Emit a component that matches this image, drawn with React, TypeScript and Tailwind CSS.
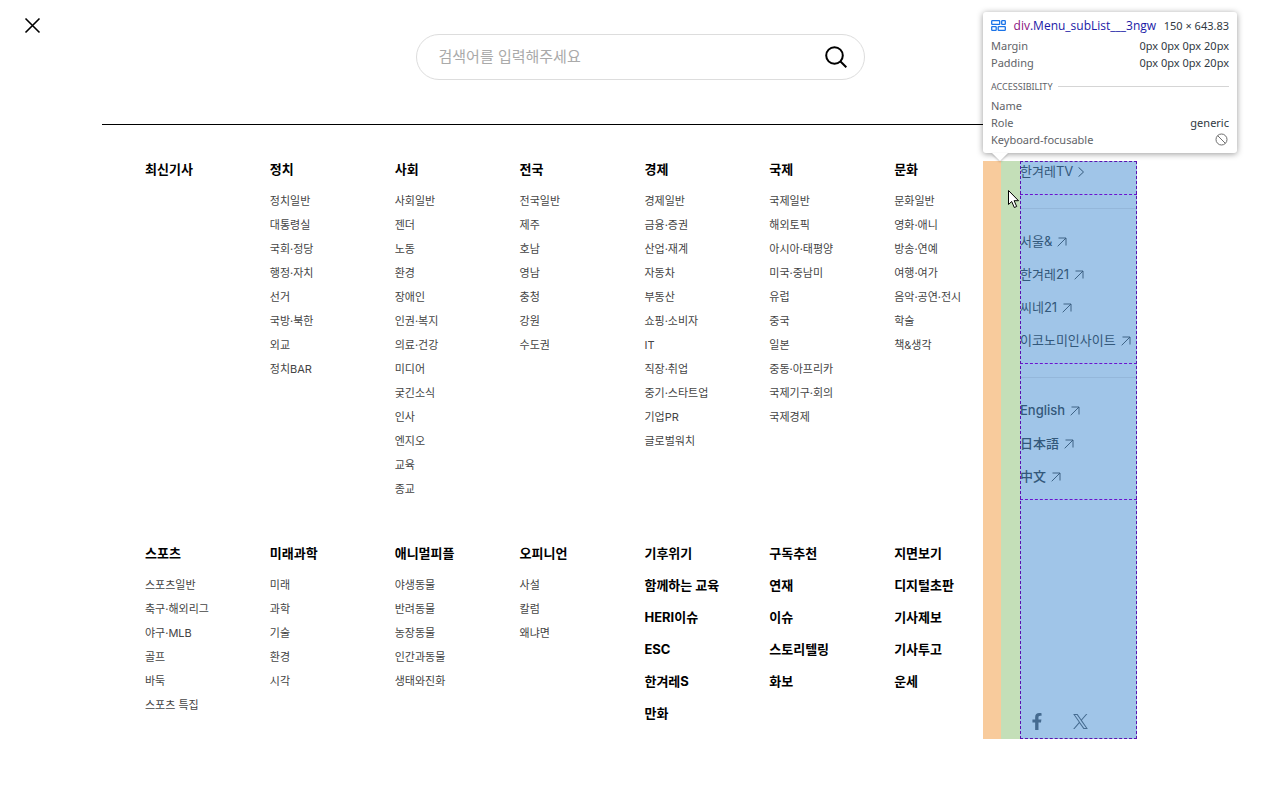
import type { ReactNode } from "react";
import { FaFacebookF } from "react-icons/fa";

type Category = { title: string; items: string[] };

const TOP: Category[] = [
  { title: "최신기사", items: [] },
  { title: "정치", items: ["정치일반", "대통령실", "국회·정당", "행정·자치", "선거", "국방·북한", "외교", "정치BAR"] },
  {
    title: "사회",
    items: ["사회일반", "젠더", "노동", "환경", "장애인", "인권·복지", "의료·건강", "미디어", "궂긴소식", "인사", "엔지오", "교육", "종교"],
  },
  { title: "전국", items: ["전국일반", "제주", "호남", "영남", "충청", "강원", "수도권"] },
  {
    title: "경제",
    items: ["경제일반", "금융·증권", "산업·재계", "자동차", "부동산", "쇼핑·소비자", "IT", "직장·취업", "중기·스타트업", "기업PR", "글로벌워치"],
  },
  {
    title: "국제",
    items: ["국제일반", "해외토픽", "아시아·태평양", "미국·중남미", "유럽", "중국", "일본", "중동·아프리카", "국제기구·회의", "국제경제"],
  },
  { title: "문화", items: ["문화일반", "영화·애니", "방송·연예", "여행·여가", "음악·공연·전시", "학술", "책&생각"] },
];

const BOTTOM: Category[] = [
  { title: "스포츠", items: ["스포츠일반", "축구·해외리그", "야구·MLB", "골프", "바둑", "스포츠 특집"] },
  { title: "미래과학", items: ["미래", "과학", "기술", "환경", "시각"] },
  { title: "애니멀피플", items: ["야생동물", "반려동물", "농장동물", "인간과동물", "생태와진화"] },
  { title: "오피니언", items: ["사설", "칼럼", "왜냐면"] },
];

const EXTRA = [
  ["기후위기", "함께하는 교육", "HERI이슈", "ESC", "한겨레S", "만화"],
  ["구독추천", "연재", "이슈", "스토리텔링", "화보"],
  ["지면보기", "디지털초판", "기사제보", "기사투고", "운세"],
];

function CategoryColumn({ title, items }: Category) {
  return (
    <div className="whitespace-nowrap">
      <h2 className="text-[13px] leading-4 font-bold text-black">
        <a href="#">{title}</a>
      </h2>
      <ul className="mt-3">
        {items.map((item) => (
          <li key={item} className="text-[11px] leading-6 text-[#444]">
            <a href="#">{item}</a>
          </li>
        ))}
      </ul>
    </div>
  );
}

function ArrowOut() {
  return (
    <svg className="size-[10px]" viewBox="0 0 10 10" fill="none" stroke="currentColor" strokeWidth="0.9" aria-hidden="true">
      <path d="M1.5 1H9v7.5M9 1 .7 9.3" />
    </svg>
  );
}

function ChevronRight() {
  return (
    <svg className="h-[10px] w-[6px]" viewBox="0 0 6 10" fill="none" stroke="currentColor" strokeWidth="1" aria-hidden="true">
      <path d="m.5.3 5 4.7-5 4.7" />
    </svg>
  );
}

function XLogo() {
  return (
    <svg className="size-[15px]" viewBox="0 0 1200 1227" fill="currentColor" aria-hidden="true">
      <path d="M714.163 519.284L1160.89 0H1055.03L667.137 450.887L357.328 0H0L468.492 681.821L0 1226.37H105.866L515.491 750.218L842.672 1226.37H1200L714.137 519.284H714.163ZM569.165 687.828L521.697 619.934L144.011 79.6944H306.615L611.412 515.685L658.88 583.579L1055.08 1150.3H892.476L569.165 687.854V687.828Z" />
    </svg>
  );
}

function SubLinks({ links, icon }: { links: string[]; icon: ReactNode }) {
  return (
    <ul className="border-b border-dashed border-[#6a14d0]">
      {links.map((link) => (
        <li key={link} className="h-[33px]">
          <a href="#" className="flex h-[22px] items-center gap-[5px] text-[13px] whitespace-nowrap">
            {link}
            {icon}
          </a>
        </li>
      ))}
    </ul>
  );
}

function TooltipRow({ label, children }: { label: string; children?: ReactNode }) {
  return (
    <div className="flex items-center justify-between">
      <dt className="text-[#5f6368]">{label}</dt>
      <dd className="text-[#303942]">{children}</dd>
    </div>
  );
}

function InspectTooltip() {
  return (
    <div
      role="tooltip"
      className="absolute bottom-full left-0 z-10 mb-2 w-[254px] rounded-[3px] bg-white px-2 py-[5px] font-['Noto_Sans','Open_Sans',sans-serif] text-[11px] leading-[17px] shadow-[0_1px_6px_rgba(0,0,0,0.4)]"
    >
      <div className="flex items-center justify-between whitespace-nowrap">
        <svg className="h-[11px] w-[15px]" viewBox="0 0 15 11" fill="none" stroke="#1a73e8" strokeWidth="1.300" aria-hidden="true">
          <rect x="0.700" y="0.700" width="8" height="3.600" rx="0.600" />
          <rect x="10.700" y="0.700" width="3.600" height="3.600" rx="0.600" />
          <rect x="0.700" y="6.700" width="4.500" height="3.600" rx="0.600" />
          <rect x="7.200" y="6.700" width="7.100" height="3.600" rx="0.600" />
        </svg>
        <strong className="font-['Open_Sans',sans-serif] text-[12px] font-medium text-[#1a1aa6]">
          <span className="text-[#881280]">div</span>.Menu_subList___3ngw
        </strong>
        <span className="text-[#303942]">150 × 643.83</span>
      </div>
      <dl className="mt-[3px]">
        <TooltipRow label="Margin">0px 0px 0px 20px</TooltipRow>
        <TooltipRow label="Padding">0px 0px 0px 20px</TooltipRow>
      </dl>
      <div className="mt-[7px] flex items-center gap-[6px] text-[9px] text-[#5f6368]">
        ACCESSIBILITY
        <span className="h-px flex-1 bg-[#d5d5d5]" />
      </div>
      <dl className="mt-[2px]">
        <TooltipRow label="Name" />
        <TooltipRow label="Role">generic</TooltipRow>
        <TooltipRow label="Keyboard-focusable">
          <svg className="mr-px size-[13px]" viewBox="0 0 13 13" fill="none" stroke="#6e6e6e" strokeWidth="1" role="img" aria-label="no">
            <circle cx="6.500" cy="6.500" r="5.500" />
            <path d="m2.600 2.600 7.800 7.800" />
          </svg>
        </TooltipRow>
      </dl>
      <svg className="absolute top-full left-[9px] h-[8px] w-[16px] drop-shadow-[0_1px_1px_rgba(0,0,0,0.25)]" viewBox="0 0 16 8" fill="#fff" aria-hidden="true">
        <path d="M0 0h16L8 8z" />
      </svg>
    </div>
  );
}

function Cursor() {
  return (
    <svg className="absolute top-[28px] left-[24px] h-[20px] w-[13px]" viewBox="0 0 13 20" fill="#fff" stroke="#000" strokeWidth="1" aria-hidden="true">
      <path d="M1.500 1.500v14l3.200-3 2.600 6 2.400-1-2.600-5.800h4.400z" />
    </svg>
  );
}

export default function App() {
  return (
    <div className="min-h-screen bg-white font-[Inter,'Noto_Sans_CJK_KR',sans-serif]">
      <header className="relative px-6 pt-[34px]">
        <button type="button" aria-label="닫기" className="absolute top-[17px] left-6">
          <svg className="size-[17px]" viewBox="0 0 17 17" fill="none" stroke="#000" strokeWidth="1.600">
            <path d="m1.500 1.500 14 14M15.500 1.500l-14 14" />
          </svg>
        </button>
        <form className="mx-auto flex h-[46px] max-w-[449px] items-center rounded-full border border-[#ddd] pr-[17px] pl-[22px]">
          <input
            type="text"
            aria-label="검색어"
            placeholder="검색어를 입력해주세요"
            className="min-w-0 flex-1 text-[15px] outline-none placeholder:text-[#aaa]"
          />
          <button type="button" aria-label="검색">
            <svg className="size-[22px]" viewBox="0 0 22 22" fill="none" stroke="#000" strokeWidth="2">
              <circle cx="9.500" cy="9.500" r="8.300" />
              <path d="m15 15 6.300 6.300" />
            </svg>
          </button>
        </form>
      </header>

      <nav className="mx-auto mt-11 flex max-w-[1076px] border-t border-black pt-9 pr-[41px] pl-[43px]">
        <div className="grid flex-1 grid-cols-7 content-start gap-x-9 gap-y-11 pb-[18px]">
          {TOP.map((category) => (
            <CategoryColumn key={category.title} {...category} />
          ))}
          {BOTTOM.map((category) => (
            <CategoryColumn key={category.title} {...category} />
          ))}
          {EXTRA.map((links) => (
            <ul key={links[0]} className="flex flex-col gap-4 text-[13px] leading-4 font-bold whitespace-nowrap text-black">
              {links.map((link) => (
                <li key={link}>
                  <a href="#">{link}</a>
                </li>
              ))}
            </ul>
          ))}
        </div>

        <aside className="relative flex w-[154px] shrink-0 bg-[#f8cb9c] pl-[18px]">
          <div className="flex flex-1 bg-[#c4dfb8] pl-[19px]">
            <div className="flex flex-1 flex-col bg-[#a0c5e8] text-[#33587a] outline-1 -outline-offset-1 outline-[#5b12b0] outline-dashed">
              <SubLinks links={["한겨레TV"]} icon={<ChevronRight />} />
              <div className="mt-[13px] border-t border-[#94b7da] pt-[22px]">
                <SubLinks links={["서울&", "한겨레21", "씨네21", "이코노미인사이트"]} icon={<ArrowOut />} />
              </div>
              <div className="mt-[13px] border-t border-[#94b7da] pt-[22px] font-medium">
                <SubLinks links={["English", "日本語", "中文"]} icon={<ArrowOut />} />
              </div>
              <div className="mt-auto flex items-center gap-[30px] pb-[9px] pl-[11px] text-[#456b90]">
                <a href="#" aria-label="Facebook">
                  <FaFacebookF className="h-[17px] w-[12px]" />
                </a>
                <a href="#" aria-label="X">
                  <XLogo />
                </a>
              </div>
            </div>
          </div>
          <InspectTooltip />
          <Cursor />
        </aside>
      </nav>
    </div>
  );
}
